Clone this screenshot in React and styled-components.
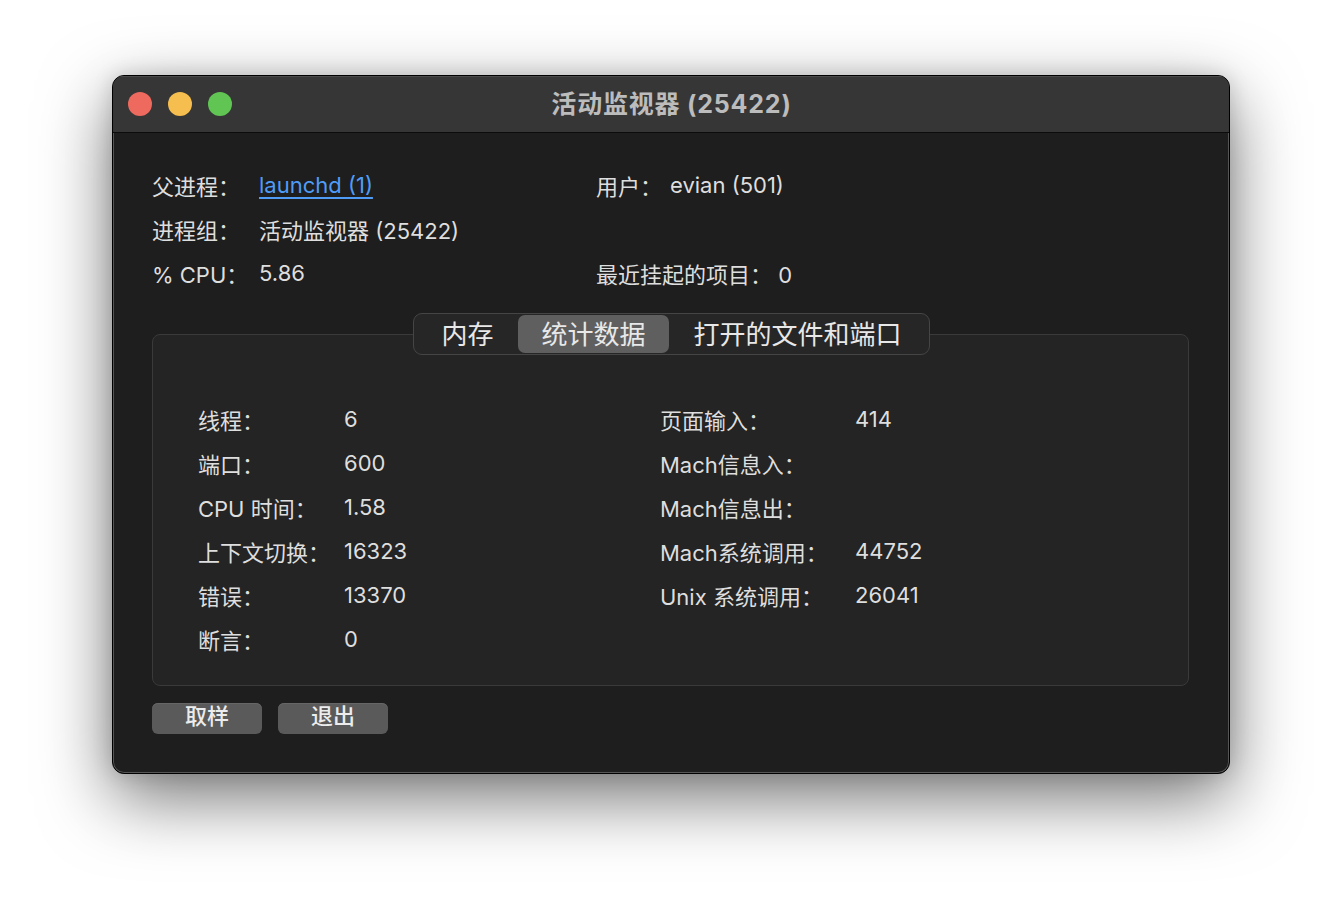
import React from "react";
import styled, { createGlobalStyle } from "styled-components";

const GlobalStyle = createGlobalStyle`
    html, body {
        margin: 0;
        padding: 0;
        background: #ffffff;
    }
    body {
        font-family: Inter, "Noto Sans CJK SC", sans-serif;
        -webkit-font-smoothing: antialiased;
    }
`;

const Page = styled.div`
    width: 1342px;
    height: 922px;
    box-sizing: border-box;
    padding: 75px 0 0 112px;
`;

const Window = styled.div`
    width: 1118px;
    height: 699px;
    box-sizing: border-box;
    display: flex;
    flex-direction: column;
    background: #1e1e1e;
    border-radius: 12px;
    border: 1px solid #000;
    box-shadow: inset 0 0 0 1px #555, 0 24px 70px rgba(0, 0, 0, 0.55),
        0 0 20px rgba(0, 0, 0, 0.15);
    overflow: hidden;
    color: #dedede;
`;

const TitleBar = styled.div`
    height: 56px;
    flex-shrink: 0;
    display: flex;
    align-items: center;
    background: #363636;
    border-bottom: 1px solid #0c0c0c;
    box-shadow: inset 0 1px 0 #4a4a4a;
    padding-left: 15px;
`;

const Lights = styled.div`
    display: flex;
    gap: 16px;
`;

const Light = styled.span`
    width: 24px;
    height: 24px;
    border-radius: 50%;
    background: ${(props) => props.color};
`;

const Title = styled.div`
    flex: 1;
    text-align: center;
    margin: -5px 118px 0 0;
    font-size: 25px;
    font-weight: 700;
    color: #bcbcbc;
    letter-spacing: 0.8px;
`;

const Content = styled.div`
    flex: 1;
    display: flex;
    flex-direction: column;
    padding: 30px 40px 0 39px;
`;

const InfoGrid = styled.div`
    display: grid;
    grid-template-columns: 107px 337px 74px 1fr;
    grid-auto-rows: 44px;
    align-items: center;
    font-size: 22px;
`;

const Cell = styled.div`
    white-space: nowrap;
`;

const Link = styled.a`
    color: #4f9cf7;
    text-decoration: underline;
    text-underline-offset: 4px;
    text-decoration-thickness: 1.5px;
    cursor: pointer;
`;

const Section = styled.div`
    margin-top: 18px;
    display: flex;
    flex-direction: column;
`;

const TabBar = styled.div`
    align-self: center;
    margin-left: 2px;
    position: relative;
    z-index: 1;
    display: flex;
    align-items: center;
    height: 42px;
    box-sizing: border-box;
    padding: 0 2px;
    margin-bottom: -21px;
    background: #262626;
    border: 1px solid #454545;
    border-radius: 9px;
`;

const Tab = styled.div`
    height: 38px;
    display: flex;
    align-items: center;
    padding: 0 ${(props) => props.pad}px 3px;
    box-sizing: border-box;
    border-radius: 7px;
    font-size: 26px;
    font-weight: 400;
    color: #e8e8e8;
    background: ${(props) => (props.active ? "#5f5f5f" : "transparent")};
`;

const Box = styled.div`
    height: 352px;
    box-sizing: border-box;
    padding: 62px 0 0 45px;
    background: #242424;
    border: 1px solid #3a3a3a;
    border-radius: 8px;
`;

const StatGrid = styled.div`
    display: grid;
    grid-template-columns: 146px 316px 195px 1fr;
    grid-auto-rows: 44px;
    align-items: center;
    font-size: 22px;
`;

const Buttons = styled.div`
    display: flex;
    gap: 16px;
    margin-top: 17px;
`;

const Button = styled.button`
    width: 110px;
    height: 31px;
    border: none;
    border-radius: 6px;
    background: #5a5a5a;
    box-shadow: inset 0 1px 0 #666;
    color: #ececec;
    font-family: Inter, "Noto Sans CJK SC", sans-serif;
    font-size: 22px;
    font-weight: 500;
    line-height: 1;
    padding: 0 0 5px;
    display: flex;
    align-items: center;
    justify-content: center;
`;

const stats = [
    ["线程：", "6", "页面输入：", "414"],
    ["端口：", "600", "Mach信息入：", ""],
    ["CPU 时间：", "1.58", "Mach信息出：", ""],
    ["上下文切换：", "16323", "Mach系统调用：", "44752"],
    ["错误：", "13370", "Unix 系统调用：", "26041"],
    ["断言：", "0", "", ""],
];

const App = () => {
    return (
        <Page>
            <GlobalStyle />
            <Window>
                <TitleBar>
                    <Lights>
                        <Light color="#ee6a5f" />
                        <Light color="#f5be4f" />
                        <Light color="#61c554" />
                    </Lights>
                    <Title>活动监视器 (25422)</Title>
                </TitleBar>
                <Content>
                    <InfoGrid>
                        <Cell>父进程：</Cell>
                        <Cell>
                            <Link>launchd (1)</Link>
                        </Cell>
                        <Cell>用户：</Cell>
                        <Cell>evian (501)</Cell>
                        <Cell>进程组：</Cell>
                        <Cell>活动监视器 (25422)</Cell>
                        <Cell />
                        <Cell />
                        <Cell>% CPU：</Cell>
                        <Cell>5.86</Cell>
                        <Cell style={{ gridColumn: "3 / 5" }}>
                            最近挂起的项目：&nbsp;0
                        </Cell>
                    </InfoGrid>
                    <Section>
                        <TabBar>
                            <Tab pad={25}>内存</Tab>
                            <Tab pad={23} active>
                                统计数据
                            </Tab>
                            <Tab pad={25}>打开的文件和端口</Tab>
                        </TabBar>
                        <Box>
                            <StatGrid>
                                {stats.map((row) =>
                                    row.map((text, i) => (
                                        <Cell key={row[0] + i}>{text}</Cell>
                                    ))
                                )}
                            </StatGrid>
                        </Box>
                    </Section>
                    <Buttons>
                        <Button>取样</Button>
                        <Button>退出</Button>
                    </Buttons>
                </Content>
            </Window>
        </Page>
    );
};

export default App;
